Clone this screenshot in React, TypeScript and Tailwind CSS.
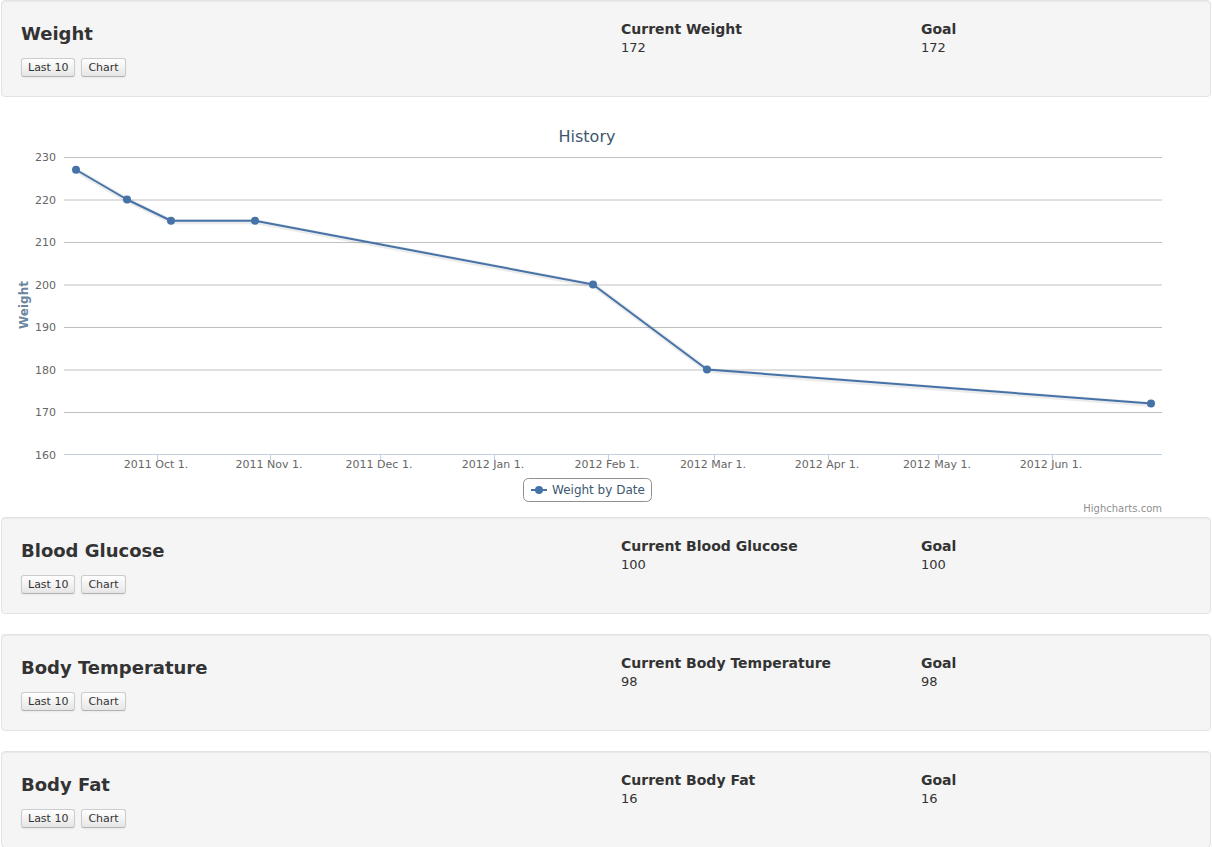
const metrics = [
  { name: "Blood Glucose", current: "Current Blood Glucose", value: "100", goal: "100" },
  { name: "Body Temperature", current: "Current Body Temperature", value: "98", goal: "98" },
  { name: "Body Fat", current: "Current Body Fat", value: "16", goal: "16" },
];

const yTicks = [230, 220, 210, 200, 190, 180, 170, 160];
const xTicks = [
  { x: 156, label: "2011 Oct 1." },
  { x: 269, label: "2011 Nov 1." },
  { x: 379, label: "2011 Dec 1." },
  { x: 493, label: "2012 Jan 1." },
  { x: 607, label: "2012 Feb 1." },
  { x: 713, label: "2012 Mar 1." },
  { x: 827, label: "2012 Apr 1." },
  { x: 937, label: "2012 May 1." },
  { x: 1051, label: "2012 Jun 1." },
];
const points: [number, number][] = [
  [75, 227],
  [126, 220],
  [170, 215],
  [254, 215],
  [592, 200],
  [706, 180],
  [1150, 172],
];

const yPos = (v: number) => 40 + (230 - v) * 4.25;

function MetricPanel({ name, current, value, goal }: { name: string; current: string; value: string; goal: string }) {
  return (
    <div className="bg-[#f5f5f5] border border-[#e3e3e3] rounded shadow-[inset_0_1px_1px_rgba(0,0,0,0.05)] p-[19px] flex text-[#333]">
      <div className="w-[600px]">
        <h3 className="text-[18px] leading-[27px] font-bold">{name}</h3>
        <div className="flex gap-[6px] mt-[11px]">
          <button className="h-[19px] px-[6px] text-[11px] leading-[14px] rounded-[3px] border border-[#ccc] border-b-[#b3b3b3] bg-gradient-to-b from-white to-[#e6e6e6] shadow-[inset_0_1px_0_rgba(255,255,255,0.2),0_1px_2px_rgba(0,0,0,0.05)]">
            Last 10
          </button>
          <button className="h-[19px] px-[6px] text-[11px] leading-[14px] rounded-[3px] border border-[#ccc] border-b-[#b3b3b3] bg-gradient-to-b from-white to-[#e6e6e6] shadow-[inset_0_1px_0_rgba(255,255,255,0.2),0_1px_2px_rgba(0,0,0,0.05)]">
            Chart
          </button>
        </div>
      </div>
      <div className="w-[300px] text-[13px] leading-[18px]">
        <div className="font-bold text-[14px] leading-[19px]">{current}</div>
        <div>{value}</div>
      </div>
      <div className="text-[13px] leading-[18px]">
        <div className="font-bold text-[14px] leading-[19px]">Goal</div>
        <div>{goal}</div>
      </div>
    </div>
  );
}

function HistoryChart() {
  const path = points.map(([x, v], i) => `${i ? "L" : "M"}${x} ${yPos(v)}`).join(" ");
  return (
    <svg width="1210" height="400" className="block" style={{ fontFamily: '"DejaVu Sans", Verdana, sans-serif' }}>
      <text x="586" y="25" textAnchor="middle" fontSize="16" fill="#3E576F">History</text>
      {yTicks.map((v) => (
        <g key={v}>
          {v !== 160 && <line x1="63" x2="1161" y1={yPos(v) + 0.5} y2={yPos(v) + 0.5} stroke="#C0C0C0" />}
          <text x="55" y={yPos(v) + 4} textAnchor="end" fontSize="11" fill="#666">{v}</text>
        </g>
      ))}
      <line x1="63" x2="1161" y1="337.5" y2="337.5" stroke="#C0D0E0" />
      {xTicks.map((t) => (
        <g key={t.label}>
          <line x1={t.x + 0.5} x2={t.x + 0.5} y1="337" y2="343" stroke="#C0D0E0" />
          <text x={t.x - 1} y="351" textAnchor="middle" fontSize="11" fill="#666">{t.label}</text>
        </g>
      ))}
      <text transform="translate(27 188) rotate(-90)" textAnchor="middle" fontSize="12" fontWeight="bold" fill="#6D869F">Weight</text>
      <path d={path} fill="none" stroke="rgba(0,0,0,0.08)" strokeWidth="5" transform="translate(1 1)" strokeLinejoin="round" />
      <path d={path} fill="none" stroke="#4572A7" strokeWidth="2" strokeLinejoin="round" />
      {points.map(([x, v]) => (
        <circle key={x} cx={x} cy={yPos(v)} r="4" fill="#4572A7" />
      ))}
      <rect x="522.5" y="361.5" width="128" height="23" rx="5" fill="none" stroke="#909090" />
      <line x1="530" x2="546" y1="373" y2="373" stroke="#4572A7" strokeWidth="2" />
      <circle cx="538" cy="373" r="4" fill="#4572A7" />
      <text x="551" y="377" fontSize="12" fill="#3E576F">Weight by Date</text>
      <text x="1161" y="395" textAnchor="end" fontSize="10" fill="#909090">Highcharts.com</text>
    </svg>
  );
}

export default function App() {
  return (
    <div className="min-h-screen bg-white px-[1px] font-['DejaVu_Sans',Verdana,sans-serif] text-[#333]">
      <MetricPanel name="Weight" current="Current Weight" value="172" goal="172" />
      <div className="mt-5">
        <HistoryChart />
      </div>
      <div className="flex flex-col gap-5">
        {metrics.map((m) => (
          <MetricPanel key={m.name} {...m} />
        ))}
      </div>
    </div>
  );
}
